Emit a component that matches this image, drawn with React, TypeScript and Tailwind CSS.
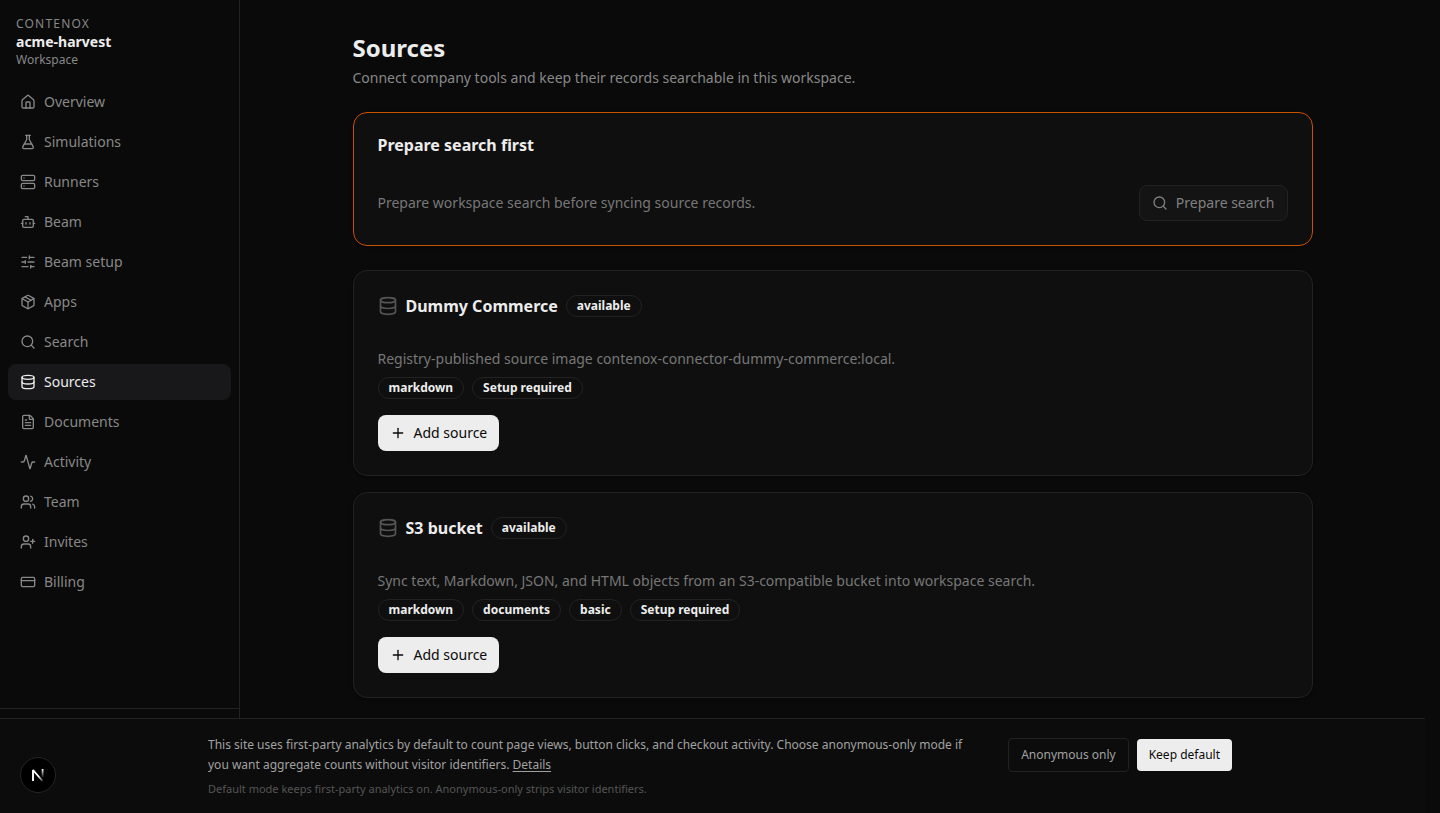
import { useState } from "react"
import {
  Activity,
  Bot,
  CreditCard,
  Database,
  FileText,
  FlaskConical,
  House,
  Package,
  Plus,
  Search,
  Server,
  SlidersHorizontal,
  UserPlus,
  Users,
  type LucideIcon,
} from "lucide-react"

type NavItem = {
  label: string
  icon: LucideIcon
}

type Source = {
  name: string
  status: string
  description: string
  tags: string[]
}

const navItems: NavItem[] = [
  { label: "Overview", icon: House },
  { label: "Simulations", icon: FlaskConical },
  { label: "Runners", icon: Server },
  { label: "Beam", icon: Bot },
  { label: "Beam setup", icon: SlidersHorizontal },
  { label: "Apps", icon: Package },
  { label: "Search", icon: Search },
  { label: "Sources", icon: Database },
  { label: "Documents", icon: FileText },
  { label: "Activity", icon: Activity },
  { label: "Team", icon: Users },
  { label: "Invites", icon: UserPlus },
  { label: "Billing", icon: CreditCard },
]

const sources: Source[] = [
  {
    name: "Dummy Commerce",
    status: "available",
    description:
      "Registry-published source image contenox-connector-dummy-commerce:local.",
    tags: ["markdown", "Setup required"],
  },
  {
    name: "S3 bucket",
    status: "available",
    description:
      "Sync text, Markdown, JSON, and HTML objects from an S3-compatible bucket into workspace search.",
    tags: ["markdown", "documents", "basic", "Setup required"],
  },
]

function Badge({ children }: { children: string }) {
  return (
    <span className="rounded-full border border-[#222222] px-2.5 py-0.5 text-xs font-bold text-[#ededed]">
      {children}
    </span>
  )
}

function Sidebar() {
  const [active, setActive] = useState("Sources")

  return (
    <aside className="sticky top-0 flex h-screen w-60 shrink-0 flex-col border-r border-[#222222]">
      <div className="px-4 pt-4 pb-2">
        <p className="text-xs tracking-widest text-[#888888] uppercase">
          Contenox
        </p>
        <p className="text-sm font-bold">acme-harvest</p>
        <p className="text-xs text-[#888888]">Workspace</p>
      </div>

      <nav className="flex flex-1 flex-col gap-1 p-2">
        {navItems.map(({ label, icon: Icon }) => (
          <a
            key={label}
            href="#"
            onClick={(e) => {
              e.preventDefault()
              setActive(label)
            }}
            className={
              active === label
                ? "flex h-9 items-center gap-2 rounded-lg bg-[#18181b] px-3 text-sm text-[#ededed]"
                : "flex h-9 items-center gap-2 rounded-lg px-3 text-sm text-[#888888]"
            }
          >
            <Icon className="size-4" />
            {label}
          </a>
        ))}
      </nav>

      <div className="h-[105px] border-t border-[#222222]" />
    </aside>
  )
}

function SourceCard({ source }: { source: Source }) {
  return (
    <section className="rounded-[14px] border border-[#222222] bg-[#0f0f0f] p-6 shadow-sm">
      <div className="flex items-center gap-2">
        <Database className="size-5 text-[#555555]" />
        <h2 className="text-base leading-5 font-bold">{source.name}</h2>
        <Badge>{source.status}</Badge>
      </div>

      <p className="mt-8 text-sm text-[#777777]">{source.description}</p>

      <div className="mt-2 flex flex-wrap gap-2">
        {source.tags.map((tag) => (
          <Badge key={tag}>{tag}</Badge>
        ))}
      </div>

      <button
        type="button"
        className="mt-4 flex h-9 items-center gap-2 rounded-lg bg-[#ededed] px-3 text-sm text-[#0a0a0a]"
      >
        <Plus className="size-4" />
        Add source
      </button>
    </section>
  )
}

function AnalyticsBanner() {
  return (
    <div className="fixed right-[15px] bottom-0 left-0 border-t border-[#222222] bg-[#0c0c0c] pl-[15px]">
      <div className="mx-auto flex max-w-5xl items-start justify-between gap-4 py-4">
        <div className="max-w-3xl">
          <p className="text-xs leading-5 text-[#a1a1a1]">
            This site uses first-party analytics by default to count page
            views, button clicks, and checkout activity. Choose anonymous-only
            mode if you want aggregate counts without visitor identifiers.{" "}
            <a href="#" className="underline underline-offset-2">
              Details
            </a>
          </p>
          <p className="mt-1.5 text-[11px] leading-4 text-[#555555]">
            Default mode keeps first-party analytics on. Anonymous-only strips
            visitor identifiers.
          </p>
        </div>

        <div className="flex shrink-0 items-center gap-2 pt-[3px]">
          <button
            type="button"
            className="rounded border border-[#222222] px-3 py-2 text-xs text-[#a1a1a1]"
          >
            Anonymous only
          </button>
          <button
            type="button"
            className="rounded bg-[#ededed] px-3 py-2 text-xs text-[#0a0a0a]"
          >
            Keep default
          </button>
        </div>
      </div>
    </div>
  )
}

function DevToolsButton() {
  return (
    <button
      type="button"
      aria-label="Open dev tools"
      className="fixed bottom-5 left-5 flex size-9 items-center justify-center rounded-full border border-[#262626] bg-black"
    >
      <svg width="14" height="14" viewBox="0 0 14 14" fill="none">
        <defs>
          <linearGradient id="diagonal" x1="8" y1="8" x2="12" y2="13" gradientUnits="userSpaceOnUse">
            <stop stopColor="#fff" />
            <stop offset="1" stopColor="#fff" stopOpacity="0.2" />
          </linearGradient>
          <linearGradient id="stem" x1="11" y1="1" x2="11" y2="10" gradientUnits="userSpaceOnUse">
            <stop stopColor="#fff" />
            <stop offset="1" stopColor="#fff" stopOpacity="0" />
          </linearGradient>
        </defs>
        <path d="M2 13V2L11.5 13" stroke="url(#diagonal)" strokeWidth="1.9" strokeLinejoin="bevel" />
        <path d="M11.6 1v9" stroke="url(#stem)" strokeWidth="1.8" />
      </svg>
    </button>
  )
}

export default function App() {
  return (
    <div className="flex min-h-screen bg-[#0a0a0a] font-['Noto_Sans',sans-serif] text-[#ededed]">
      <Sidebar />

      <main className="mr-[15px] flex-1 px-6 pt-8">
        <div className="mx-auto max-w-[960px]">
          <header className="mb-6">
            <h1 className="text-2xl font-bold">Sources</h1>
            <p className="mt-1 text-sm text-[#888888]">
              Connect company tools and keep their records searchable in this
              workspace.
            </p>
          </header>

          <section className="mb-6 rounded-[14px] border border-[#ca5100] bg-[#0f0f0f] p-6 shadow-sm">
            <h2 className="text-base leading-4 font-bold">
              Prepare search first
            </h2>
            <div className="mt-8 flex items-center justify-between gap-4">
              <p className="text-sm text-[#777777]">
                Prepare workspace search before syncing source records.
              </p>
              <button
                type="button"
                className="flex h-9 items-center gap-2 rounded-lg border border-[#222222] bg-[#141414] px-3 text-sm text-[#808080]"
              >
                <Search className="size-4" />
                Prepare search
              </button>
            </div>
          </section>

          <div className="flex flex-col gap-4">
            {sources.map((source) => (
              <SourceCard key={source.name} source={source} />
            ))}
          </div>
        </div>
      </main>

      <AnalyticsBanner />
      <DevToolsButton />
    </div>
  )
}
